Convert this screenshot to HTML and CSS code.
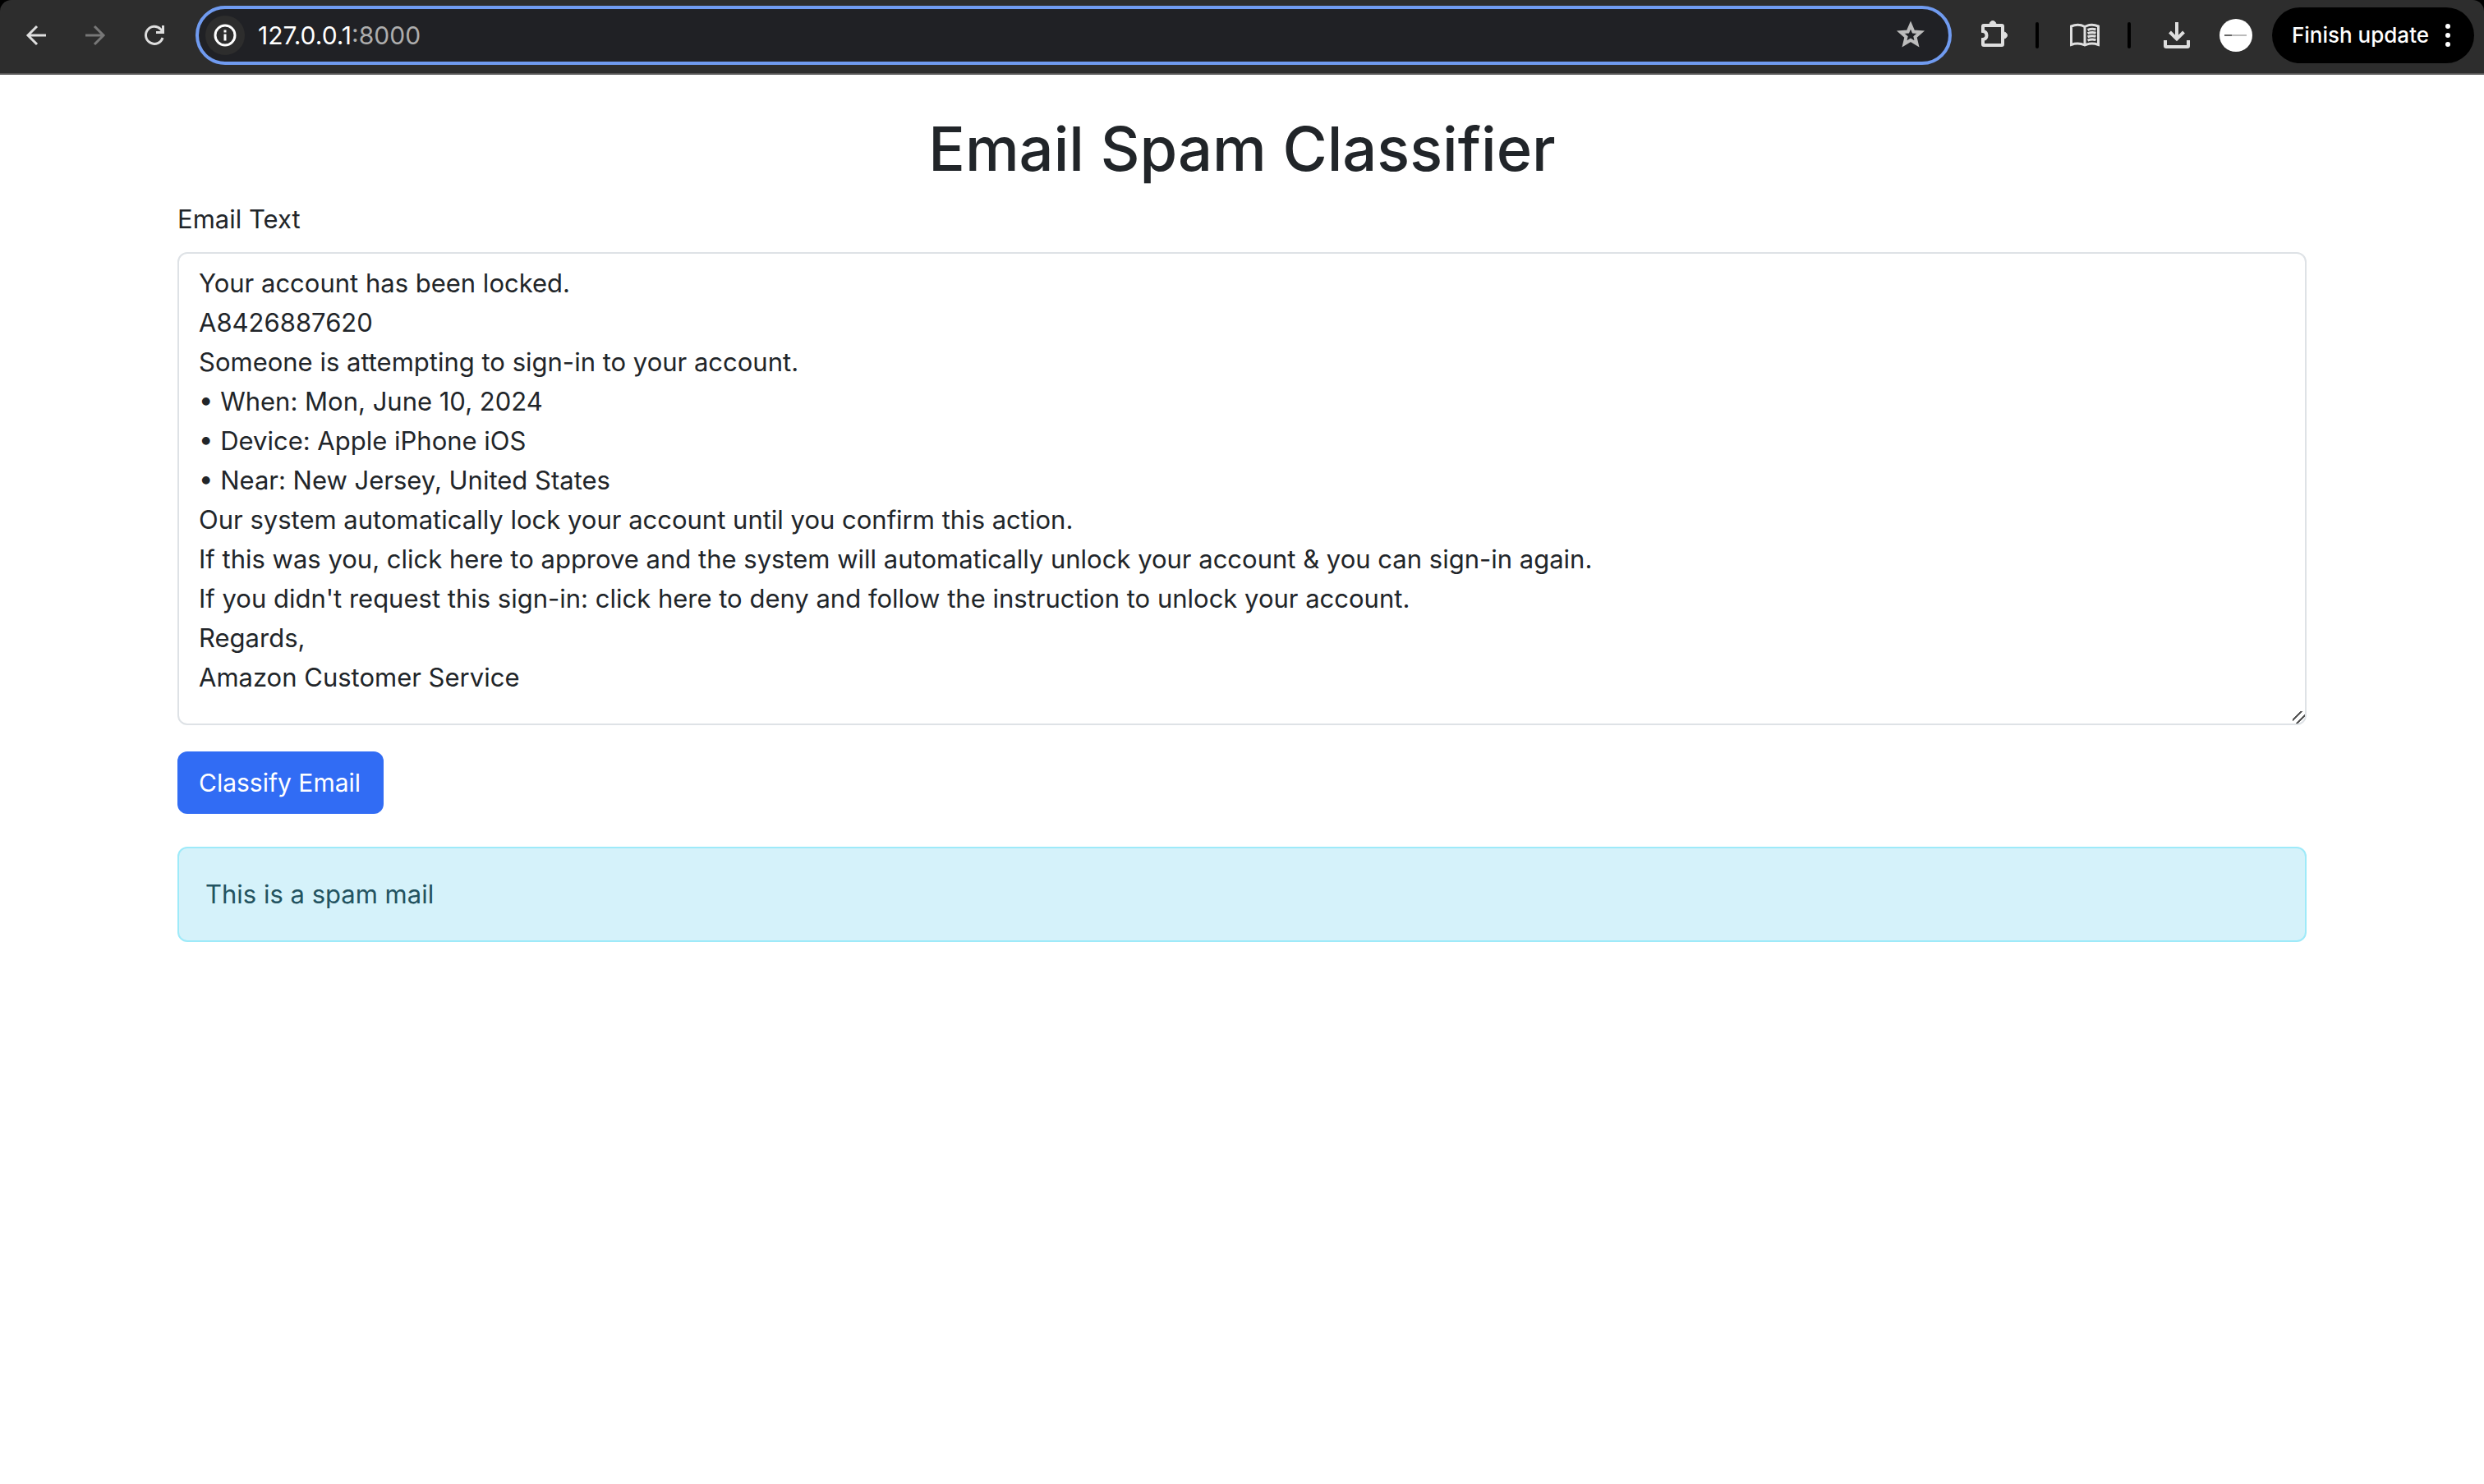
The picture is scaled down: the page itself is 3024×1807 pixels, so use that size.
FILE: index.html
```html
<!DOCTYPE html>
<html lang="en">
<head>
<meta charset="utf-8">
<title>Email Spam Classifier</title>
<link rel="stylesheet" href="styles.css">
</head>
<body>
<div class="browser">
<header class="toolbar">
  <nav class="nav" aria-label="History">
    <button class="nav-btn" type="button" aria-label="Back">
      <svg class="icon" viewBox="0 0 40 40"><path d="M32 20H10M21 9L10 20l11 11"/></svg>
    </button>
    <button class="nav-btn nav-btn-off" type="button" aria-label="Forward">
      <svg class="icon" viewBox="0 0 40 40"><path d="M8 20h22M19 9l11 11-11 11"/></svg>
    </button>
    <button class="nav-btn" type="button" aria-label="Reload">
      <svg class="icon" viewBox="0 0 40 40"><path d="M30 23A10.500 10.500 0 1 1 27.500 12.500L30 15.500M30.500 8v8.500H22"/></svg>
    </button>
  </nav>
  <div class="omnibox">
    <button class="site-info" type="button" aria-label="Site information">
      <svg class="icon" viewBox="0 0 40 40"><circle cx="20" cy="20" r="12"/><path d="M20 18.500v8M20 13.500v3"/></svg>
    </button>
    <div class="url" role="textbox" aria-label="Address">127.0.0.1<span class="port">:8000</span></div>
    <button class="star" type="button" aria-label="Bookmark">
      <svg class="icon" viewBox="0 0 40 40"><path d="M20 7.500l3.400 8 8.700.700-6.600 5.700 2 8.500L20 25.900l-7.500 4.500 2-8.500-6.600-5.700 8.700-.700z"/></svg>
    </button>
  </div>
  <div class="actions">
    <button class="tool" type="button" aria-label="Extensions">
      <svg class="icon" viewBox="0 0 40 40"><path d="M9 8h22q1 0 1 1v22q0 1-1 1H9q-1 0-1-1v-6c6-1 6-9 0-10V9q0-1 1-1z"/><path class="solid" d="M16 7a4 4.500 0 0 1 8 0zM33 16a4.500 4 0 0 1 0 8z"/></svg>
    </button>
    <span class="sep"></span>
    <button class="tool" type="button" aria-label="Reading list">
      <svg class="icon" viewBox="0 0 40 40"><path class="thin" d="M3.500 9q8.500-3.500 16.500.500 8-4 16.500-.500v22.500q-8.500-3-16.500.500-8-3.500-16.500-.500zM20 9.500v22.500M23.500 13.500q5-2 10-.500M23.500 17.700q5-2 10-.500M23.500 21.900q5-2 10-.500M23.500 26.100q5-2 10-.500"/></svg>
    </button>
    <span class="sep"></span>
    <button class="tool" type="button" aria-label="Downloads">
      <svg class="icon" viewBox="0 0 40 40"><path d="M20 4v20M11.500 16l8.500 8.500 8.500-8.500M6 26v7q0 1 1 1h26q1 0 1-1v-7"/></svg>
    </button>
    <button class="avatar" type="button" aria-label="Profile"><span class="avatar-mark"></span></button>
  </div>
  <button class="update" type="button">Finish update
    <svg class="dots" viewBox="0 0 8 32"><circle cx="4" cy="5" r="3"/><circle cx="4" cy="16" r="3"/><circle cx="4" cy="27" r="3"/></svg>
  </button>
</header>
</div>
<main class="container">
  <h1 class="title">Email Spam Classifier</h1>
  <form class="form">
    <label class="label" for="email">Email Text</label>
    <textarea class="field" id="email" rows="11" spellcheck="false">Your account has been locked.
A8426887620
Someone is attempting to sign-in to your account.
• When: Mon, June 10, 2024
• Device: Apple iPhone iOS
• Near: New Jersey, United States
Our system automatically lock your account until you confirm this action.
If this was you, click here to approve and the system will automatically unlock your account &amp; you can sign-in again.
If you didn't request this sign-in: click here to deny and follow the instruction to unlock your account.
Regards,
Amazon Customer Service</textarea>
    <button class="submit" type="submit">Classify Email</button>
  </form>
  <div class="alert" role="alert">This is a spam mail</div>
</main>
</body>
</html>
```
FILE: styles.css
```css
* { box-sizing: border-box; }
body { margin: 0; background: #fff; color: #212529; font: 31px/48px Inter, "Liberation Sans", sans-serif; }
button, textarea { font: inherit; color: inherit; margin: 0; }
button { border: 0; background: none; padding: 0; }
.browser { background: #000; }
.toolbar { display: flex; align-items: center; padding: 7px 12px 10px 8px; border-bottom: 2px solid #565555; border-radius: 14px 14px 0 0; background: #2d2d2d; color: #dedede; }
.nav { display: flex; margin-right: 14px; }
.nav-btn { display: flex; justify-content: center; width: 72px; }
.nav-btn-off { color: #777; }
.icon { display: block; width: 40px; height: 40px; fill: none; stroke: currentColor; stroke-width: 3; }
.star .icon, .tool .icon { stroke-width: 4; }
.icon .thin { stroke-width: 3; }
.icon .solid { fill: currentColor; stroke-width: 1; }
.omnibox { flex: 1; display: flex; align-items: center; height: 72px; padding: 0 26px 0 8px; border: 4px solid #709bf0; border-radius: 36px; background: #202125; }
.site-info { display: flex; align-items: center; justify-content: center; width: 48px; height: 48px; border-radius: 50%; background: #2d2d2d; color: #fff; }
.url { flex: 1; margin-left: 16px; font-size: 30px; line-height: 40px; color: #fff; }
.port { color: #adadad; }
.star { color: #bcbcbc; }
.actions { display: flex; align-items: center; gap: 32px; margin: 0 24px 0 30px; }
.sep { width: 4px; height: 32px; margin-right: 4px; border-radius: 2px; background: #000; }
.avatar { display: flex; align-items: center; justify-content: center; width: 40px; height: 40px; border-radius: 50%; background: #fff; }
.avatar-mark { width: 27px; height: 2px; background: linear-gradient(to right, #666 32%, #bbb 32%); }
.update { display: flex; align-items: center; gap: 19px; height: 68px; padding: 0 28px 0 24px; border-radius: 34px; background: #000; color: #fff; font-size: 26px; line-height: 40px; font-weight: 500; }
.dots { width: 8px; height: 32px; fill: currentColor; }
.container { max-width: 2640px; margin: 0 auto; padding: 40px 24px; }
.title { margin: 0 0 12px; font-size: 74px; line-height: 100px; font-weight: 500; text-align: center; }
.form { margin-bottom: 40px; }
.label { display: block; margin-bottom: 16px; }
.field { display: block; width: 100%; margin-bottom: 32px; padding: 12px 24px 32px; border: 2px solid #dee2e6; border-radius: 12px; background: #fff; resize: vertical; outline: 0; }
.field::-webkit-resizer { background: linear-gradient(135deg, transparent 7px, #555 7px, #555 9px, transparent 9px, transparent 13px, #555 13px, #555 15px, transparent 15px); }
.submit { padding: 14px 28px 14px 26px; border-radius: 12px; background: #316cf4; color: #fff; font-size: 30px; }
.alert { padding: 32px; border: 2px solid #9eeaf9; border-radius: 12px; background: #d5f2fa; color: #235360; }
```
